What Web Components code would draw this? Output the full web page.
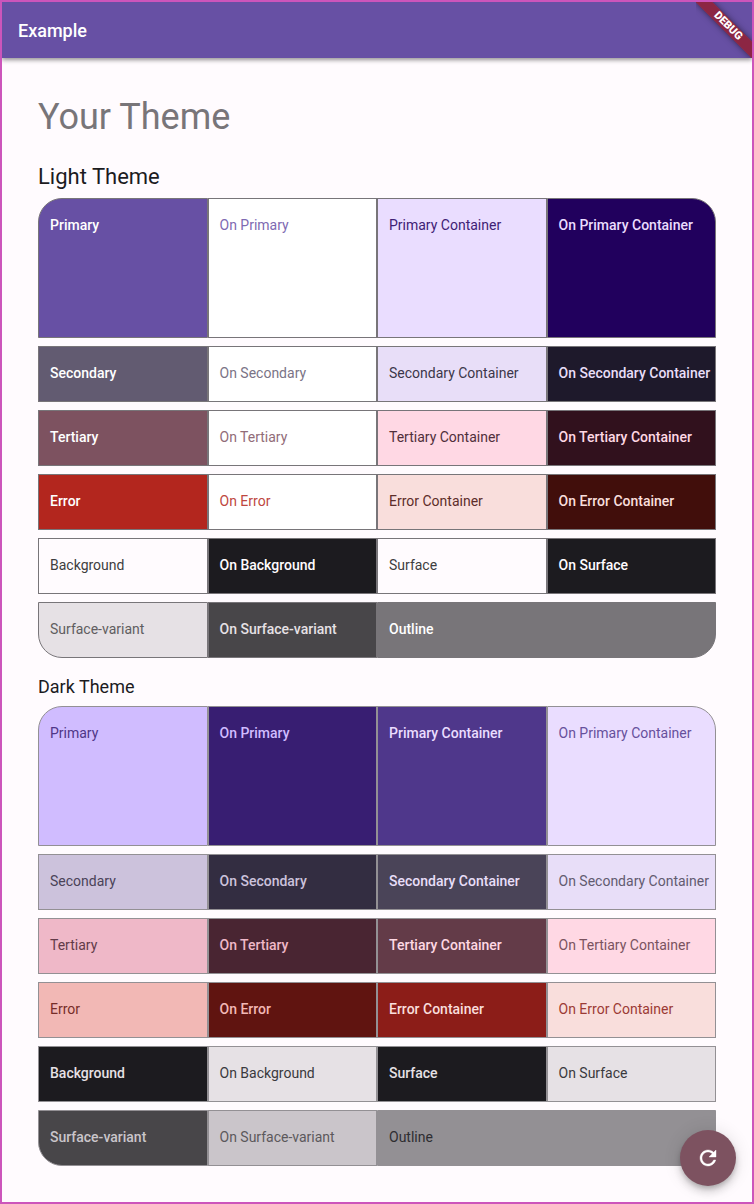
<!DOCTYPE html>
<html lang="en">
<head>
<meta charset="utf-8">
<meta name="viewport" content="width=device-width, initial-scale=1">
<title>Example</title>
<style>
body { margin: 0; background: #fffbfe; color: #1c1b1f; font-family: Roboto, "Liberation Sans", sans-serif; }
</style>
</head>
<body>
<theme-app>
  <app-bar slot="bar">Example</app-bar>
  <color-palette heading="Light Theme" size="large" outline="#787579">
    <palette-row first>
      <color-swatch fill="#6750a4" ink="#ffffff">Primary</color-swatch>
      <color-swatch fill="#ffffff" ink="#6750a4">On Primary</color-swatch>
      <color-swatch fill="#eaddff" ink="#21005d">Primary Container</color-swatch>
      <color-swatch fill="#21005d" ink="#eaddff">On Primary Container</color-swatch>
    </palette-row>
    <palette-row>
      <color-swatch fill="#625b71" ink="#ffffff">Secondary</color-swatch>
      <color-swatch fill="#ffffff" ink="#625b71">On Secondary</color-swatch>
      <color-swatch fill="#e8def8" ink="#1e192b">Secondary Container</color-swatch>
      <color-swatch fill="#1e192b" ink="#e8def8">On Secondary Container</color-swatch>
    </palette-row>
    <palette-row>
      <color-swatch fill="#7d5260" ink="#ffffff">Tertiary</color-swatch>
      <color-swatch fill="#ffffff" ink="#7d5260">On Tertiary</color-swatch>
      <color-swatch fill="#ffd8e4" ink="#31111d">Tertiary Container</color-swatch>
      <color-swatch fill="#31111d" ink="#ffd8e4">On Tertiary Container</color-swatch>
    </palette-row>
    <palette-row>
      <color-swatch fill="#b3261e" ink="#ffffff">Error</color-swatch>
      <color-swatch fill="#ffffff" ink="#b3261e">On Error</color-swatch>
      <color-swatch fill="#f9dedc" ink="#410e0b">Error Container</color-swatch>
      <color-swatch fill="#410e0b" ink="#f9dedc">On Error Container</color-swatch>
    </palette-row>
    <palette-row>
      <color-swatch fill="#fffbfe" ink="#1c1b1f">Background</color-swatch>
      <color-swatch fill="#1c1b1f" ink="#fffbfe">On Background</color-swatch>
      <color-swatch fill="#fffbfe" ink="#1c1b1f">Surface</color-swatch>
      <color-swatch fill="#1c1b1f" ink="#fffbfe">On Surface</color-swatch>
    </palette-row>
    <palette-row last>
      <color-swatch fill="#e6e1e5" ink="#484649">Surface-variant</color-swatch>
      <color-swatch fill="#484649" ink="#e6e1e5">On Surface-variant</color-swatch>
      <color-swatch wide fill="#787579" ink="#ffffff">Outline</color-swatch>
    </palette-row>
  </color-palette>
  <color-palette heading="Dark Theme" outline="#939094">
    <palette-row first>
      <color-swatch fill="#d0bcff" ink="#381e72">Primary</color-swatch>
      <color-swatch fill="#381e72" ink="#d0bcff">On Primary</color-swatch>
      <color-swatch fill="#4f378b" ink="#eaddff">Primary Container</color-swatch>
      <color-swatch fill="#eaddff" ink="#4f378b">On Primary Container</color-swatch>
    </palette-row>
    <palette-row>
      <color-swatch fill="#ccc2dc" ink="#332d41">Secondary</color-swatch>
      <color-swatch fill="#332d41" ink="#ccc2dc">On Secondary</color-swatch>
      <color-swatch fill="#4a4458" ink="#e8def8">Secondary Container</color-swatch>
      <color-swatch fill="#e8def8" ink="#4a4458">On Secondary Container</color-swatch>
    </palette-row>
    <palette-row>
      <color-swatch fill="#efb8c8" ink="#492532">Tertiary</color-swatch>
      <color-swatch fill="#492532" ink="#efb8c8">On Tertiary</color-swatch>
      <color-swatch fill="#633b48" ink="#ffd8e4">Tertiary Container</color-swatch>
      <color-swatch fill="#ffd8e4" ink="#633b48">On Tertiary Container</color-swatch>
    </palette-row>
    <palette-row>
      <color-swatch fill="#f2b8b5" ink="#601410">Error</color-swatch>
      <color-swatch fill="#601410" ink="#f2b8b5">On Error</color-swatch>
      <color-swatch fill="#8c1d18" ink="#f9dedc">Error Container</color-swatch>
      <color-swatch fill="#f9dedc" ink="#8c1d18">On Error Container</color-swatch>
    </palette-row>
    <palette-row>
      <color-swatch fill="#1c1b1f" ink="#e6e1e5">Background</color-swatch>
      <color-swatch fill="#e6e1e5" ink="#1c1b1f">On Background</color-swatch>
      <color-swatch fill="#1c1b1f" ink="#e6e1e5">Surface</color-swatch>
      <color-swatch fill="#e6e1e5" ink="#1c1b1f">On Surface</color-swatch>
    </palette-row>
    <palette-row last>
      <color-swatch fill="#484649" ink="#cac5ca">Surface-variant</color-swatch>
      <color-swatch fill="#cac5ca" ink="#484649">On Surface-variant</color-swatch>
      <color-swatch wide fill="#939094" ink="#1c1b1f">Outline</color-swatch>
    </palette-row>
  </color-palette>
  <refresh-button slot="action"></refresh-button>
</theme-app>

<script>
function define(name, markup, setup) {
  customElements.define(name, class extends HTMLElement {
    connectedCallback() {
      if (this.shadowRoot) return;
      this.attachShadow({ mode: "open" }).innerHTML = markup;
      if (setup) setup(this, this.shadowRoot);
    }
  });
}

// Sum of the channels of a #rrggbb colour, enough to tell light from dark.
function brightness(hex) {
  return [1, 3, 5].reduce((sum, i) => sum + parseInt(hex.slice(i, i + 2), 16), 0);
}

define("theme-app", `
  <style>
    :host { display: flex; flex-direction: column; box-sizing: border-box; min-height: 100vh; border: 2px solid #cc55bb; }
    main { padding: 36px; }
    h1 { margin: 0 0 22px; font-size: 36px; line-height: 46px; font-weight: 400; color: #787579; }
  </style>
  <slot name="bar"></slot>
  <main><h1>Your Theme</h1><slot></slot></main>
  <slot name="action"></slot>`);

define("app-bar", `
  <style>
    :host { display: block; position: relative; background: #6750a4; color: #fff; box-shadow: 0 2px 4px rgba(0,0,0,.3), 0 1px 6px rgba(0,0,0,.2); clip-path: inset(0 0 -12px 0); }
    header { display: flex; align-items: center; box-sizing: border-box; height: 56px; padding: 2px 16px 0; font-size: 18px; line-height: 24px; font-weight: 500; }
    debug-banner { position: absolute; top: 0; right: 0; }
  </style>
  <header><slot></slot></header>
  <debug-banner></debug-banner>`);

define("debug-banner", `
  <style>
    :host { display: flex; align-items: center; justify-content: center; width: 48px; height: 48px; padding: 0 0 8px 8px; overflow: hidden; }
    span { flex: none; width: 80px; transform: rotate(45deg); background: rgba(160,16,16,.66); box-shadow: 0 0 6px rgba(0,0,0,.5); color: #fff; text-align: center; font-size: 11px; line-height: 12px; font-weight: 900; }
  </style>
  <span>DEBUG</span>`);

define("color-palette", `
  <style>
    :host { display: block; }
    :host(:not([size=large])) { margin-top: 16px; }
    h2 { margin: 0 0 6px; font-size: 18px; line-height: 26px; font-weight: 400; }
    :host([size=large]) h2 { font-size: 22px; line-height: 30px; }
    section { display: grid; gap: 8px; }
  </style>
  <h2></h2><section><slot></slot></section>`, (host, root) => {
    root.querySelector("h2").textContent = host.getAttribute("heading");
    host.style.setProperty("--outline", host.getAttribute("outline"));
  });

define("palette-row", `
  <style>
    :host { display: grid; grid-template-columns: repeat(4, 1fr); min-height: 56px; overflow: hidden; }
    :host([first]) { min-height: 140px; --top: 24px; }
    :host([last]) { --bottom: 24px; }
    ::slotted(:first-child) { border-radius: var(--top, 0) 0 0 var(--bottom, 0); }
    ::slotted(:last-child) { border-radius: 0 var(--top, 0) var(--bottom, 0) 0; }
  </style>
  <slot></slot>`);

define("color-swatch", `
  <style>
    :host { display: block; box-sizing: border-box; min-width: 0; padding: 16px 0 0 11px; border: 1px solid var(--outline); background: var(--fill); color: color-mix(in srgb, var(--ink) 85%, var(--fill)); font-size: 14px; line-height: 20px; white-space: nowrap; }
    :host([wide]) { grid-column: span 2; }
    :host(.on-dark) { color: var(--ink); font-weight: 500; }
  </style>
  <slot></slot>`, host => {
    const fill = host.getAttribute("fill");
    const ink = host.getAttribute("ink");
    host.style.setProperty("--fill", fill);
    host.style.setProperty("--ink", ink);
    host.classList.toggle("on-dark", brightness(ink) > brightness(fill));
  });

define("refresh-button", `
  <style>
    :host { position: fixed; right: 18px; bottom: 18px; }
    button { display: grid; place-items: center; width: 56px; height: 56px; padding: 0; border: 0; border-radius: 50%; background: #7d5260; color: #fff; box-shadow: 0 3px 5px -1px rgba(0,0,0,.2), 0 6px 10px rgba(0,0,0,.14), 0 1px 18px rgba(0,0,0,.12); cursor: pointer; }
  </style>
  <button aria-label="Refresh"><svg width="24" height="24" viewBox="0 0 24 24" fill="currentColor" stroke="currentColor" stroke-width=".4" aria-hidden="true"><path d="M17.65 6.35C16.2 4.9 14.21 4 12 4c-4.42 0-7.99 3.58-7.99 8s3.57 8 7.99 8c3.73 0 6.84-2.55 7.73-6h-2.08c-.82 2.33-3.04 4-5.65 4-3.31 0-6-2.69-6-6s2.69-6 6-6c1.66 0 3.14.69 4.22 1.78L13 11h7V4l-2.35 2.35z"/></svg></button>`);
</script>
</body>
</html>
